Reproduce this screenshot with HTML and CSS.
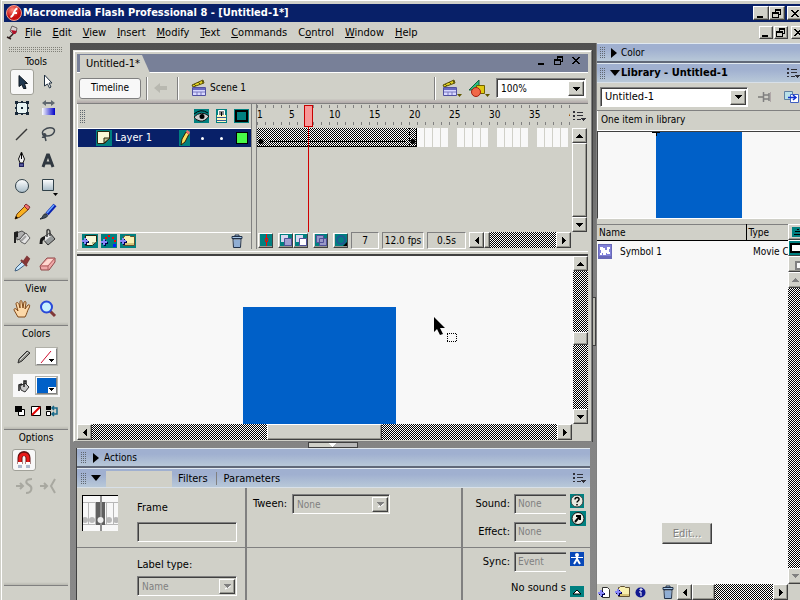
FILE: index.html
```html
<!DOCTYPE html>
<html lang="en">
<head>
<meta charset="utf-8">
<title>Macromedia Flash Professional 8 - [Untitled-1*]</title>
<link rel="stylesheet" href="styles.css">
</head>
<body>
<svg class="defs" aria-hidden="true">
  <defs>
    <linearGradient id="silver" x1="0" y1="0" x2="0" y2="1"><stop offset="0" stop-color="#fff"/><stop offset="1" stop-color="#a8bcc8"/></linearGradient>
    <linearGradient id="blueRamp"><stop offset="0" stop-color="#fff"/><stop offset="1" stop-color="#0000c8"/></linearGradient>
    <radialGradient id="redBall" cx=".4" cy=".3"><stop offset="0" stop-color="#ff9080"/><stop offset="1" stop-color="#c81010"/></radialGradient>
  </defs>
  <symbol id="up" viewBox="0 0 7 4"><path d="M3 0h1v1h1v1h1v1h1v1H0V3h1V2h1V1h1z"/></symbol>
  <symbol id="down" viewBox="0 0 7 4"><path d="M0 0h7v1H6v1H5v1H4v1H3V3H2V2H1V1H0z"/></symbol>
  <symbol id="left" viewBox="0 0 4 7"><path d="M4 0v7H3V6H2V5H1V4H0V3h1V2h1V1h1V0z"/></symbol>
  <symbol id="right" viewBox="0 0 4 7"><path d="M0 0v7h1V6h1V5h1V4h1V3H3V2H2V1H1V0z"/></symbol>
  <symbol id="min" viewBox="0 0 10 9"><path d="M1 7h6v2H1z"/></symbol>
  <symbol id="restore" viewBox="0 0 10 9"><path d="M3 0h6v6H7V5h1V2H4v1H3zM0 3h7v6H0zm1 2v3h5V5z" fill-rule="evenodd"/></symbol>
  <symbol id="close" viewBox="0 0 10 9"><path d="M1 1h2v1h1v1h2V2h1V1h2v1H8v1H7v1H6v1h1v1h1v1h1v1H7V7H6V6H4v1H3v1H1V7h1V6h1V5h1V4H3V3H2V2H1z"/></symbol>
  <symbol id="menu" viewBox="0 0 13 10"><path d="M0 0h2v2H0zM0 4h2v2H0zM0 8h2v1H0zM4 1h6v1H4zM4 4h6v1H4zM4 8h4v1H4zM8 7h5v1h-1v1h-1v1h-1V9H9V8H8z" fill="#303038"/></symbol>
  <symbol id="clap" viewBox="0 0 16 18"><path d="M1 6 12 1l1 3-11 4z" fill="#e0d020" stroke="#5a5008"/><path d="m3 5 2 2m2-4 2 2m2-4 1 3" stroke="#5a5008"/><path d="M1.500 8.500h13v8h-13z" fill="#d8d8ff" stroke="#5050a0"/><path d="M2 9h12v2H2z" fill="#6868c0"/><path d="M2 13h12M6 13v3m4-3v3" stroke="#7878c0"/></symbol>
  <symbol id="trash" viewBox="0 0 14 15"><path d="M5 2V1h4v1m-7 .5h10v2H2z" fill="#a8c8e8" stroke="#203048"/><path d="M3 5h8l-.5 8.500h-7z" fill="#e8f4ff" stroke="#203048"/><path d="M5 6v7m2-7v7m2-7v7" stroke="#3868a8"/></symbol>
  <symbol id="folder" viewBox="0 0 16 14"><path d="M3.500 4V2.500h1l1-1h4l1 1h4v9h-11z" fill="#f8f0b0" stroke="#605030"/><path d="M4 9h10v2H4z" fill="#d8c478"/><use href="#plus" y="4" width="7" height="7"/></symbol>
  <symbol id="plus" viewBox="0 0 7 7"><path d="M3 1h2v2h2v2H5v2H3V5H1V3h2z" fill="#000050"/><path d="M2 0h2v2h2v2H4v2H2V4H0V2h2z" fill="#8888f8"/></symbol>
  <symbol id="offarrow" viewBox="0 0 9 6"><path d="M2 5l5-3v1z" stroke="#fff"/><path d="M1 0h7v1H7v1H6v1H5v1H4V3H3V2H2V1H1z" fill="#808080"/></symbol>
</svg>

<header class="titlebar">
  <svg width="18" height="18" viewBox="0 0 18 18"><circle cx="9" cy="9" r="7.500" fill="url(#redBall)" stroke="#f0a090"/><path d="M12.500 4.500c-4 0-3 8-7 8.500m2.500-4h4" stroke="#fff" stroke-width="2" fill="none"/></svg>
  <h1>Macromedia Flash Professional 8 - [Untitled-1*]</h1>
  <div class="winbtns">
    <button aria-label="Minimize"><svg width="10" height="9"><use href="#min"/></svg></button><button aria-label="Restore"><svg width="10" height="9"><use href="#restore"/></svg></button><button class="gap" aria-label="Close"><svg width="10" height="9"><use href="#close"/></svg></button>
  </div>
</header>
<nav class="menubar">
  <svg width="13" height="16" viewBox="0 0 13 16"><path d="m6 1 5 2-1 5-3 1-3-3z" fill="#d8d0d0" stroke="#686060"/><path d="m5 5 6 1-2 3H7z" fill="#b01028"/><path d="m7 9-4 4m-2-1 4 2" stroke="#302020" stroke-width="1.500"/></svg>
  <a href="#"><u>F</u>ile</a><a href="#"><u>E</u>dit</a><a href="#"><u>V</u>iew</a><a href="#"><u>I</u>nsert</a><a href="#"><u>M</u>odify</a><a href="#"><u>T</u>ext</a><a href="#"><u>C</u>ommands</a><a href="#">C<u>o</u>ntrol</a><a href="#"><u>W</u>indow</a><a href="#"><u>H</u>elp</a>
  <div class="winbtns small">
    <button aria-label="Minimize document"><svg width="10" height="9"><use href="#min"/></svg></button><button aria-label="Restore document"><svg width="10" height="9"><use href="#restore"/></svg></button><button class="gap" aria-label="Close document"><svg width="10" height="9"><use href="#close"/></svg></button>
  </div>
</nav>

<div class="workspace">
  <aside class="tools">
    <div class="grip-h"></div>
    <h2>Tools</h2>
    <div class="toolgrid">
      <button class="on" aria-label="Selection"><svg width="20" height="20" viewBox="0 0 20 20"><path d="M7 3.500v11l3-2 1.500 4h2.500l-1.500-5h3z" fill="#203850" stroke="#101820"/></svg></button>
      <button aria-label="Subselection"><svg width="20" height="20" viewBox="0 0 20 20"><path d="M6.500 3v11l3-2 2 4 1.500-1-2-4h3z" fill="#fff" stroke="#203040"/></svg></button>
      <button aria-label="Free transform"><svg width="20" height="20" viewBox="0 0 20 20"><path d="M4.500 4.500h11v11h-11z" fill="#e8f4f4" stroke="#203040"/><path d="M3 3h3v3H3zM14 3h3v3h-3zM3 14h3v3H3zM14 14h3v3h-3zM9 3h2v2H9zM9 15h2v2H9zM3 9h2v2H3zM15 9h2v2h-2zM9 9h2v2H9z" fill="#182838"/></svg></button>
      <button aria-label="Gradient transform"><svg width="20" height="20" viewBox="0 0 20 20"><path d="M4 10h13v7H4z" fill="url(#blueRamp)"/><path d="m4 5 4-3v2h5V2l4 3-4 3V6H8v2z" fill="#606870"/></svg></button>
      <button aria-label="Line"><svg width="20" height="20" viewBox="0 0 20 20"><path d="M4 16 15 5" stroke="#383838" stroke-width="1.500"/></svg></button>
      <button aria-label="Lasso"><svg width="20" height="20" viewBox="0 0 20 20"><path d="M6 12C1 7 9 3 14 4s2 8-5 8c-4 0-4-3-2-2s0 4-3 3m3 0 1 4" fill="none" stroke="#404850" stroke-width="1.500"/></svg></button>
      <button aria-label="Pen"><svg width="20" height="20" viewBox="0 0 20 20"><path d="m9.500 2 3 7-1.500 4H8L6.500 9z" fill="#f0f0f0" stroke="#101010"/><path d="M9.500 3v6" stroke="#000"/><path d="M7 13h5v4H7z" fill="#202060"/><path d="M8 15h3" stroke="#8890d0"/></svg></button>
      <button aria-label="Text"><svg width="20" height="20" viewBox="0 0 20 20"><path d="M5 17 9.500 5h1L15 17M7 13h6" fill="none" stroke="#303840" stroke-width="3"/></svg></button>
      <button aria-label="Oval"><svg width="20" height="20" viewBox="0 0 20 20"><circle cx="10" cy="10" r="6.500" fill="url(#silver)" stroke="#304048"/></svg></button>
      <button aria-label="Rectangle"><svg width="20" height="20" viewBox="0 0 20 20"><path d="M4.500 3.500h11v11h-11z" fill="url(#silver)" stroke="#304048"/><path d="M15 17h5l-2.500 3z"/></svg></button>
      <button aria-label="Pencil"><svg width="20" height="20" viewBox="0 0 20 20"><path d="m3 17 2-5 8-8 4 3-9 8z" fill="#f8b020" stroke="#704010"/><path d="m12 4 2-2 4 3-2 3z" fill="#f07070" stroke="#803030"/><path d="m3 17 1-3 2 2z" fill="#000"/></svg></button>
      <button aria-label="Brush"><svg width="20" height="20" viewBox="0 0 20 20"><path d="m9 12 8-9" stroke="#0820b0" stroke-width="4"/><path d="m9 11 7-8" stroke="#68a8ff" stroke-width="1.500"/><path d="M2 17c3-1 3-6 6-5s2 4-6 5z" fill="#405060" stroke="#202830"/></svg></button>
      <button aria-label="Ink bottle"><svg width="20" height="20" viewBox="0 0 20 20"><path d="m7 10 7-5 4 5-5 6-4-2z" fill="#e4e4e4" stroke="#606060"/><path d="m4 5 6-2 3 2-5 6-3 1z" fill="#b0b0b0" stroke="#505050"/><path d="M3 15V5l3-1M5 5v4" fill="none" stroke="#202020" stroke-width="2"/><path d="m9 13 5-5" stroke="#a0a0a0" stroke-width="2"/></svg></button>
      <button aria-label="Paint bucket"><svg width="20" height="20" viewBox="0 0 20 20"><path d="m4 10 8-5 5 6-7 6z" fill="#989c9c" stroke="#303030"/><path d="m5 10 6-4 2 2-6 5z" fill="#e8e8e8"/><path d="M3 16c0-5 1-6 4-6" fill="none" stroke="#181818" stroke-width="3"/><path d="M9 9V3c0-2 3-2 3 1v4" fill="none" stroke="#404040" stroke-width="1.500"/></svg></button>
      <button aria-label="Eyedropper"><svg width="20" height="20" viewBox="0 0 20 20"><path d="m3 17 1-3 7-7 3 3-8 6z" fill="#c8e8ff" stroke="#406080"/><path d="m9 6 6 6M12 7l3-4 2 2-3 5z" fill="#a03030" stroke="#803838" stroke-width="2"/></svg></button>
      <button aria-label="Eraser"><svg width="20" height="20" viewBox="0 0 20 20"><path d="m2 12 7-8h8v4l-6 8H3z" fill="#f0a8a8" stroke="#904848"/><path d="M2 12h8l7-8m-7 8v4" stroke="#b06060" fill="none"/><path d="m4 11 6-6h5l-5 6z" fill="#ffd8d0"/></svg></button>
    </div>
    <hr>
    <h2>View</h2>
    <div class="toolgrid">
      <button aria-label="Hand"><svg width="20" height="20" viewBox="0 0 20 20"><path d="M6 18 2 11c0-2 2-2 4 1L4 5c0-2 2-2 3 0l1 4V3c0-2 2-2 2 0l1 6 1-6c1-1 2-1 2 1l-1 6 3-4c2-1 2 1 1 3-2 3-2 6-4 9z" fill="#fcd8a8" stroke="#804818"/></svg></button>
      <button aria-label="Zoom"><svg width="20" height="20" viewBox="0 0 20 20"><path d="m12 12 5 5" stroke="#803838" stroke-width="3"/><circle cx="8.500" cy="8" r="5.500" fill="#c8f0ff" stroke="#2848d8" stroke-width="2"/></svg></button>
    </div>
    <hr>
    <h2>Colors</h2>
    <div class="colorrow">
      <svg width="14" height="14" viewBox="0 0 14 14"><path d="m1 13 1-4 8-8 3 2-8 8z" fill="#909088" stroke="#303030"/><path d="m3 10 8-8" stroke="#ddd"/></svg>
      <button class="swatch none" aria-label="Stroke color"><svg width="19" height="15" viewBox="0 0 19 15"><path d="M4 14 14 2" stroke="#d01030"/><path d="M12 10h5v1h-1v1h-1v1h-1v-1h-1v-1h-1z"/></svg></button>
    </div>
    <div class="colorrow active">
      <svg width="14" height="14" viewBox="0 0 14 14"><path d="m3 7 5-3 4 4-4 5-4-2z" fill="#c8c8c8" stroke="#303030"/><path d="M2 12V6l3-1m2 3V2h2v3" fill="none" stroke="#202020" stroke-width="1.500"/></svg>
      <button class="swatch" aria-label="Fill color"><svg width="19" height="15" viewBox="0 0 19 15"><path d="M0 0h19v15H0z" fill="#0060c8"/><path d="M11 9h8v6h-8z" fill="#fff"/><path d="M12 10h5v1h-1v1h-1v1h-1v-1h-1v-1h-1z"/></svg></button>
    </div>
    <div class="trio">
      <button aria-label="Black and white"><svg width="12" height="12" viewBox="0 0 12 12"><path d="M4.500 4.500h6v6h-6z" fill="#fff" stroke="#000"/><path d="M1 1h7v6H1z"/></svg></button>
      <button aria-label="No color"><svg width="12" height="12" viewBox="0 0 12 12"><path d="M1.500 1.500h9v9h-9z" fill="#fff" stroke="#000"/><path d="m2 10 8-8" stroke="#e00000" stroke-width="2"/></svg></button>
      <button aria-label="Swap colors"><svg width="13" height="12" viewBox="0 0 13 12"><path d="M0 1h5v4H0z"/><path d="M.5 6.500h4v4h-4z" fill="#fff" stroke="#000"/><path d="M6 3h5v6H6M8 1 6 3l2 2m0 2-2 2 2 2" fill="none" stroke="#186888" stroke-width="1.500"/></svg></button>
    </div>
    <hr>
    <h2>Options</h2>
    <button class="magnet" aria-label="Snap to objects"><svg width="16" height="18" viewBox="0 0 16 18"><path d="M4 13V7c0-6 8-6 8 0v6" fill="none" stroke="#601010" stroke-width="5"/><path d="M4 12V7c0-5 8-5 8 0v5" fill="none" stroke="#e81818" stroke-width="3"/><path d="M2 11h4v2H2zM10 11h4v2h-4z" fill="#fff"/><path d="M3 14v3m2-3v3m6-3v3m2-3v3" stroke="#6078a0"/></svg></button>
    <div class="snaps">
      <svg width="18" height="16" viewBox="0 0 18 16"><path d="M0 8h6M4 5l3 3-3 3M16 1c-7 0-7 4-3 6s3 8-3 8" fill="none" stroke="#a8a8a0" stroke-width="2"/></svg>
      <svg width="16" height="16" viewBox="0 0 16 16"><path d="M0 8h6M4 5l3 3-3 3M15 1l-4 7 4 7" fill="none" stroke="#a8a8a0" stroke-width="2"/></svg>
    </div>
    <hr class="last">
  </aside>

  <main class="center">
    <section class="doc">
      <div class="tabs">
        <a class="tab" href="#">Untitled-1*</a>
        <div class="flatbtns">
          <button aria-label="Minimize"><svg width="10" height="9"><use href="#min"/></svg></button><button aria-label="Restore"><svg width="10" height="9"><use href="#restore"/></svg></button><button aria-label="Close"><svg width="10" height="9"><use href="#close"/></svg></button>
        </div>
      </div>
      <div class="scenebar">
        <button class="timelinebtn">Timeline</button>
        <span class="vsep"></span>
        <svg width="14" height="12" viewBox="0 0 14 12"><path d="m0 6 6-5v3h7v4H6v3z" fill="#b8b8b0"/></svg>
        <span class="vsep"></span>
        <a class="scene" href="#"><svg width="16" height="18"><use href="#clap"/></svg>Scene 1</a>
        <span class="vsep push"></span>
        <button class="plain" aria-label="Edit scene"><svg width="20" height="19" viewBox="0 0 20 19"><use href="#clap" width="16" height="18"/><path d="M15 15h5l-2.500 3z" fill="#605800"/></svg></button>
        <button class="plain" aria-label="Edit symbols"><svg width="22" height="19" viewBox="0 0 22 19"><path d="M1 11 11 1v10z" fill="#28c080" stroke="#106040"/><path d="M8.500 6.500h8v8h-8z" fill="#e0c810" stroke="#706000"/><circle cx="8" cy="13" r="4.500" fill="#f06848" stroke="#a02010"/><path d="M17 15h5l-2.500 3z" fill="#605800"/></svg></button>
        <div class="combo zoom"><select aria-label="Zoom"><option>100%</option></select><span class="arrow"><svg width="7" height="4"><use href="#down"/></svg></span></div>
      </div>

      <div class="timeline">
        <div class="layers">
          <div class="layerhead">
            <span class="grip"></span>
            <span class="heads">
              <svg width="15" height="14" viewBox="0 0 15 14"><path d="M0 0h15v14H0z" fill="#008080"/><path d="M0 8q7-7 15-1-4 6-9 5T0 8z" fill="#d0d0d0" stroke="#101010"/><circle cx="8" cy="7.500" r="2.500"/><path d="M0 5q7-6 14-1" fill="none" stroke="#000"/></svg>
              <svg width="11" height="14" viewBox="0 0 11 14"><path d="M0 0h11v14H0z" fill="#008080"/><path d="M2.500 7V1.500h6V7" fill="#888" stroke="#fff"/><path d="M1 6h9v7H1z" fill="#fff8c0"/><path d="M1 8.500h9M1 11.500h9" stroke="#385898"/><path d="M5 3h1v4H5z"/></svg>
              <svg width="15" height="14" viewBox="0 0 15 14"><path d="M0 0h15v14H0z" fill="#008080"/><path d="M2 2h11v10H2z" fill="none" stroke="#000" stroke-width="2"/></svg>
            </span>
          </div>
          <div class="layer">
            <svg width="16" height="16" viewBox="0 0 16 16"><path d="M0 0h16v16H0z" fill="#008080"/><path d="M1.500 1.500h12v7l-5 5h-7z" fill="#f8f8d8" stroke="#282810"/><path d="M8 13V8h6z" fill="#c8c898" stroke="#282810"/></svg>
            <span class="lname">Layer 1</span>
            <svg width="11" height="16" viewBox="0 0 11 16"><path d="M0 0h11v16H0z" fill="#008080"/><path d="m2 15 1-6 4-7 3 2-4 8z" fill="#f8e060" stroke="#302000"/><path d="m7 2 1-2 3 2-1 3z" fill="#f07070"/></svg>
            <i></i><i></i><b></b>
          </div>
          <div class="layerempty"></div>
          <div class="layertools">
            <button class="plain" aria-label="Insert layer"><svg width="16" height="14" viewBox="0 0 16 14"><path d="M0 0h16v14H0z" fill="#008080"/><path d="M3.500 1.500h11v6l-4 4h-7z" fill="#f8f8d8" stroke="#282810"/><path d="M10 11V8h4z" fill="#c0c090"/><use href="#plus" y="4" width="7" height="7"/></svg></button>
            <button class="plain" aria-label="Add motion guide"><svg width="16" height="14" viewBox="0 0 16 14"><path d="M0 0h16v14H0z" fill="#008080"/><path d="M4 3h2v2H4zM7 1h2v2H7zM11 3h2v2h-2zM13 6h2v2h-2z" fill="red"/><path d="M12 10h3v3h-3z" fill="#0020ff"/><use href="#plus" y="5" width="7" height="7"/></svg></button>
            <button class="plain" aria-label="Insert layer folder"><svg width="16" height="14" viewBox="0 0 16 14"><path d="M0 0h16v14H0z" fill="#008080"/><use href="#folder" width="16" height="14"/></svg></button>
            <button class="plain push" aria-label="Delete layer"><svg width="14" height="15"><use href="#trash"/></svg></button>
          </div>
        </div>
        <div class="frames">
          <div class="ruler"><span>1</span><span>5</span><span>10</span><span>15</span><span>20</span><span>25</span><span>30</span><span>35</span><span>40</span></div>
          <div class="framerow"><div class="tween"><svg viewBox="0 0 160 19" width="160" height="19"><path d="M13 13.500h136" stroke="#000" fill="none"/><path d="M152.500 0v19" stroke="#000" stroke-dasharray="2 1"/><circle cx="4" cy="13.500" r="2.500"/><circle cx="156" cy="13.500" r="2.500"/></svg></div></div>
          <div class="playhead"></div>
          <div class="framebar">
            <button class="fb" aria-label="Center frame"><svg width="12" height="12" viewBox="0 0 12 12"><path d="M0 0h12v12H0z" fill="#008080"/><path d="M6.500 0v12" stroke="red"/><path d="M5.500 4.500h2v3h-2z" fill="#008080" stroke="red"/></svg></button>
            <button class="fb sp" aria-label="Onion skin"><svg width="12" height="12" viewBox="0 0 12 12"><path d="M0 0h12v12H0z" fill="#008080"/><path d="M1 1h7v7H1z" fill="#d8d8f0"/><path d="M4.500 4.500h7v7h-7z" fill="#a0a0d0" stroke="#505098"/></svg></button>
            <button class="fb" aria-label="Onion skin outlines"><svg width="12" height="12" viewBox="0 0 12 12"><path d="M0 0h12v12H0z" fill="#008080"/><path d="M1 1h7v7H1z" fill="#d8d8f0"/><path d="M4.500 4.500h7v7h-7z" fill="#fff" stroke="#505098"/></svg></button>
            <button class="fb sp" aria-label="Edit multiple frames"><svg width="12" height="12" viewBox="0 0 12 12"><path d="M0 0h12v12H0z" fill="#008080"/><path d="M1.500 1.500h7v7h-7zM4.500 4.500h7v7h-7z" fill="#9898c8" stroke="#505098"/></svg></button>
            <button class="fb sp" aria-label="Modify onion markers"><svg width="12" height="12" viewBox="0 0 12 12"><path d="M0 0h12v12H0z" fill="#008080"/><circle cx="6" cy="6" r="4" fill="none" stroke="#205890" stroke-width="2"/><path d="M12 8v4H8z"/></svg></button>
            <span class="cell c1">7</span><span class="cell c2">12.0 fps</span><span class="cell c3">0.5s</span>
            <div class="hscroll short"><button aria-label="Scroll left"><svg width="4" height="7"><use href="#left"/></svg></button><span class="thumb"></span><span class="track"></span><button aria-label="Scroll right"><svg width="4" height="7"><use href="#right"/></svg></button></div>
          </div>
        </div>
        <div class="tlside">
          <button class="plain" aria-label="Frame view"><svg width="13" height="10"><use href="#menu"/></svg></button>
          <div class="vscroll"><button aria-label="Scroll up"><svg width="7" height="4"><use href="#up"/></svg></button><span class="thumb grow"></span><button aria-label="Scroll down"><svg width="7" height="4"><use href="#down"/></svg></button></div>
        </div>
      </div>

      <div class="stage">
        <div class="canvas">
          <div class="shape"></div>
          <svg class="cursor" width="25" height="26" viewBox="0 0 25 26"><path d="M1 0v15l3-3 3 6 3-1-3-6h5z"/><path d="M14 16.500h10M14 24.500h10M14.500 17v8M23.500 17v8" stroke="#000" stroke-dasharray="1 1"/></svg>
        </div>
        <div class="vscroll"><button aria-label="Scroll up"><svg width="7" height="4"><use href="#up"/></svg></button><span class="track t1"></span><span class="thumb"></span><span class="track t2"></span><button aria-label="Scroll down"><svg width="7" height="4"><use href="#down"/></svg></button></div>
      </div>
      <div class="hrow">
        <div class="hscroll"><button aria-label="Scroll left"><svg width="4" height="7"><use href="#left"/></svg></button><span class="track"></span><span class="thumb"></span><span class="track"></span><button aria-label="Scroll right"><svg width="4" height="7"><use href="#right"/></svg></button></div>
      </div>
    </section>
    <div class="splitter"><button aria-label="Collapse panels"><svg width="7" height="4"><use href="#down"/></svg></button></div>

    <section class="props">
      <div class="phead"><span class="grip"></span><svg class="tri" width="6" height="10" viewBox="0 0 6 10"><path d="M0 0 6 5 0 10z"/></svg><h3>Actions</h3></div>
      <div class="phead second"><span class="grip"></span><svg class="tri" width="10" height="6" viewBox="0 0 10 6"><path d="M0 0h10L5 6z"/></svg><span class="ptab"></span><a href="#">Filters</a><a href="#" class="div">Parameters</a><button class="plain push" aria-label="Panel options"><svg width="13" height="10"><use href="#menu"/></svg></button></div>
      <div class="pbody">
        <div class="pc framebox">
          <svg width="36" height="36" viewBox="0 0 36 36"><path d="M0 0h36v36H0z" fill="#f8f8f8"/><path d="M0 7.500h36M0 29.500h36M6.500 7v23M13.500 7v23M24.500 7v23M31.500 7v23" stroke="#b8b8b8"/><path d="M14 7h9v23h-9z" fill="#606060"/><path d="M18 0h2v36h-2z" fill="#909090"/><g fill="#b8b8b8"><circle cx="3" cy="25" r="3"/><circle cx="10" cy="25" r="3"/><circle cx="18.500" cy="25" r="3" fill="#eee"/><circle cx="27" cy="25" r="3"/><circle cx="34" cy="25" r="3"/></g><path d="M0 36V0h36" fill="none" stroke="#000" stroke-width="2"/></svg>
          <div class="framelabel"><label for="fl">Frame</label><input id="fl" type="text"></div>
        </div>
        <div class="pc tween-c"><label for="tw">Tween:</label><div class="combo off"><select id="tw" disabled><option>None</option></select><span class="arrow"><svg width="9" height="6"><use href="#offarrow"/></svg></span></div></div>
        <div class="pc soundbox">
          <label for="so">Sound:</label><select id="so" disabled><option>None</option></select>
          <span class="stack"><button class="plain" aria-label="Help"><svg width="14" height="14" viewBox="0 0 14 14"><path d="M0 0h14v14H0z" fill="#008080"/><circle cx="7" cy="7" r="6" fill="#e8e8e0" stroke="#404040"/><path d="M5 5.500c0-3 4.500-2.500 4 0C9 7 7 7 7 8.500M7 10v1.500" fill="none" stroke="#000" stroke-width="1.500"/></svg></button></span>
          <label for="ef">Effect:</label><select id="ef" disabled><option>None</option></select>
          <span class="stack upper"><button class="plain" aria-label="Edit envelope"><svg width="16" height="15" viewBox="0 0 16 15"><path d="M0 0h16v15H0z" fill="#008080"/><circle cx="8" cy="7.500" r="6" fill="#f0f0e8" stroke="#101010"/><path d="m5 11 5-6M6 5h4v4" fill="none" stroke="#000" stroke-width="2"/></svg></button></span>
        </div>
        <div class="pc labeltype"><label for="lt">Label type:</label><div class="combo off"><select id="lt" disabled><option>Name</option></select><span class="arrow"><svg width="9" height="6"><use href="#offarrow"/></svg></span></div></div>
        <div class="pc"></div>
        <div class="pc soundbox low">
          <label for="sy">Sync:</label><select id="sy" disabled><option>Event</option></select>
          <span class="stack"><button class="plain" aria-label="Accessibility"><svg width="14" height="14" viewBox="0 0 14 14"><path d="M0 0h14v14H0z" fill="#0848b8"/><circle cx="7" cy="3" r="2" fill="#fff"/><path d="M1 5.500h12" stroke="#fff"/><path d="M7 4v4M7 7l-3 5M7 7l3 5" stroke="#fff" stroke-width="2"/></svg></button></span>
          <span class="nosound">No sound s</span>
          <span class="stack"><button class="plain" aria-label="Shrink"><svg width="14" height="11" viewBox="0 0 14 11"><path d="M0 0h14v11H0z" fill="#008080"/><path d="m3 8 4-4 4 4z" fill="#fff" stroke="#000"/></svg></button></span>
        </div>
      </div>
    </section>
  </main>

  <aside class="library">
    <button class="sidehandle" aria-label="Collapse library"></button>
    <div class="phead"><span class="grip"></span><svg class="tri" width="6" height="10" viewBox="0 0 6 10"><path d="M0 0 6 5 0 10z"/></svg><h3>Color</h3></div>
    <div class="phead second lib"><span class="grip"></span><svg class="tri" width="10" height="6" viewBox="0 0 10 6"><path d="M0 0h10L5 6z"/></svg><h3 class="strong">Library - Untitled-1</h3><button class="plain push" aria-label="Library options"><svg width="13" height="10"><use href="#menu"/></svg></button></div>
    <div class="libpick">
      <div class="combo"><select aria-label="Library document"><option>Untitled-1</option></select><span class="arrow"><svg width="7" height="4"><use href="#down"/></svg></span></div>
      <button class="plain" aria-label="Pin library"><svg width="14" height="12" viewBox="0 0 14 12"><path d="M0 6h5" stroke="#505050"/><path d="M5.500 1v10M6 4h5v4H6m5-6v8" fill="none" stroke="#808080" stroke-width="1.500"/><path d="M12 1h1v10h-1z" fill="#b0a8a8"/></svg></button>
      <button class="plain" aria-label="New library panel"><svg width="15" height="12" viewBox="0 0 15 12"><path d="M.5.500h8v8h-8z" fill="#b8e0e8" stroke="#6080a0"/><path d="M6.500 3.500h8v8h-8z" fill="#fff" stroke="#4060c0"/><path d="M4 6.500h7M9 4l3 2.500L9 9" fill="none" stroke="#1030d0" stroke-width="1.500"/></svg></button>
    </div>
    <p class="count">One item in library</p>
    <div class="preview"><div class="pshape"></div></div>
    <div class="libmain">
      <div class="list">
        <table>
          <thead><tr><th>Name</th><th>Type</th></tr></thead>
          <tbody><tr><td><svg width="14" height="16" viewBox="0 0 14 16"><path d="M0 0h14v15H0z" fill="#6868b8"/><path d="M1 1h12v11H1z" fill="#8080d8"/><path d="M2 3h3v1h2v2h2V3h3v2h-1v3h1v2H9V9H8v2H5V9H3V6H2zM2 9h2v2H2z" fill="#fff"/></svg>Symbol 1</td><td>Movie Clip</td></tr></tbody>
        </table>
        <button class="edit" disabled>Edit...</button>
      </div>
      <div class="libside">
        <button aria-label="Toggle sort order"><svg width="12" height="13" viewBox="0 0 12 13"><path d="M3 1h9v10H3z" fill="#008080"/><path d="M8 3h2v1H8zM6 5h6v1H6zM5 8h7v1H5z"/></svg></button>
        <button aria-label="Wide library view"><svg width="12" height="14" viewBox="0 0 12 14"><path d="M0 0h12v14H0z" fill="#008080"/><path d="M2 3h10v8H2z" fill="#fff" stroke="#000" stroke-width="2"/></svg></button>
        <button aria-label="Narrow library view"><svg width="12" height="13" viewBox="0 0 12 13"><path d="M7 4h5v7H7z" fill="#f8f8f8" stroke="#808080" stroke-width="2"/></svg></button>
        <button aria-label="Scroll up" class="dis"><svg width="7" height="4"><use href="#up"/></svg></button>
        <span class="track"></span>
        <button aria-label="Scroll down" class="dis"><svg width="7" height="4"><use href="#down"/></svg></button>
      </div>
    </div>
    <div class="libfoot">
      <button class="plain" aria-label="New symbol"><svg width="13" height="13" viewBox="0 0 13 13"><path d="M4.500 1.500h5l2 2v8h-7z" fill="#fff" stroke="#303030"/><use href="#plus" y="4" width="7" height="7"/></svg></button>
      <button class="plain" aria-label="New folder"><svg width="16" height="14"><use href="#folder"/></svg></button>
      <button class="plain" aria-label="Properties"><svg width="11" height="11" viewBox="0 0 11 11"><circle cx="5.500" cy="5.500" r="5" fill="#101890"/><path d="M5 2h2v1H5zM4 5h2v4" stroke="#fff" fill="none"/></svg></button>
      <button class="plain push" aria-label="Delete"><svg width="14" height="15"><use href="#trash"/></svg></button>
      <div class="hscroll"><button aria-label="Scroll left"><svg width="4" height="7"><use href="#left"/></svg></button><span class="thumb"></span><span class="track"></span><button aria-label="Scroll right"><svg width="4" height="7"><use href="#right"/></svg></button></div>
    </div>
  </aside>
</div>
</body>
</html>
```
FILE: styles.css
```css
* { box-sizing: border-box; }
:root {
  --face: #d0d0c8;
  --paper: #f8f8f8;
  --shade: #808080;
  --dark: #404040;
  --blue: #0060c8;
  --hatch: repeating-conic-gradient(#000 0 25%, #fff 0 50%) 0 0 / 2px 2px;
}
body {
  margin: 0;
  height: 100vh;
  display: flex;
  flex-direction: column;
  overflow: hidden;
  background: var(--face);
  border-left: 1px solid var(--face);
  box-shadow: inset 1px 1px #fff;
  padding: 4px 0 0 3px;
  font: 10px/14px "DejaVu Sans Condensed", "DejaVu Sans", sans-serif;
  color: #000;
}
button, select, input { font: inherit; color: inherit; margin: 0; padding: 0; border-radius: 0; }
a { color: inherit; text-decoration: none; }
h1, h2, h3, p { margin: 0; font-size: 10px; font-weight: normal; }
svg { display: block; flex: none; }
.defs { position: absolute; width: 0; height: 0; }
.push { margin-left: auto; }
.plain { border: 0; background: none; display: block; flex: none; }

/* raised buttons */
.winbtns button, .hscroll button, .vscroll button, .thumb, .libside button, .fb, .arrow {
  background: var(--face);
  border: 1px solid;
  border-color: #fff var(--dark) var(--dark) #fff;
  box-shadow: inset -1px -1px #989890;
  display: flex;
  align-items: center;
  justify-content: center;
  flex: none;
}
.titlebar { display: flex; align-items: center; height: 18px; flex: none; background: #082068; color: #fff; padding-left: 1px; }
.titlebar h1 { font-size: 11px; font-weight: bold; white-space: nowrap; }
.winbtns { display: flex; margin-left: auto; color: #000; }
.winbtns button { width: 16px; height: 14px; }
.winbtns .gap { margin-left: 2px; }
.titlebar .winbtns { margin-right: -3px; }
.menubar { display: flex; align-items: center; height: 21px; flex: none; padding-left: 2px; font-size: 11px; }
.menubar a { margin-right: 11px; }
.menubar svg + a { margin-left: 6px; }
.winbtns.small button { width: 14px; height: 13px; }
.menubar .winbtns { margin-right: -5px; gap: 1px; }

.workspace { flex: 1; display: flex; min-height: 0; }

/* tools */
.tools { width: 66px; flex: none; display: flex; flex-direction: column; align-items: center; padding: 4px 2px 0 0; }
.grip-h { width: 54px; height: 5px; margin-bottom: 3px; background: conic-gradient(at 1px 1px, transparent 75%, #808078 0) 0 0 / 2px 2px; flex: none; }
.tools h2 { height: 14px; flex: none; }
.toolgrid { display: grid; grid-template-columns: 24px 24px; grid-auto-rows: 26px; column-gap: 2px; flex: none; margin-right: 2px; }
.toolgrid button { border: 0; background: none; display: flex; align-items: center; justify-content: center; }
.toolgrid .on, .magnet { background: var(--paper); border: 1px solid #a0a098; border-radius: 3px; }
.tools hr { width: 64px; height: 4px; margin: 0 0 1px; border: 0; border-bottom: 1px solid var(--shade); background: linear-gradient(var(--face), #b8b8b0); flex: none; }
.colorrow { display: flex; align-items: center; justify-content: flex-end; gap: 5px; width: 47px; height: 23px; padding-right: 3px; margin: 4px 0 2px; flex: none; }
.colorrow.active { background: var(--paper); }
.swatch { background: #fff; border: 1px solid #fff; border-right-color: var(--shade); border-bottom-color: var(--shade); outline: 1px solid #b0b0a8; width: 21px; height: 17px; }
.trio { display: flex; gap: 4px; margin: 6px 0 9px; flex: none; }
.trio button { border: 0; background: none; }
.magnet { width: 24px; height: 22px; display: flex; justify-content: center; align-items: center; align-self: flex-start; margin: 4px 0 0 8px; flex: none; }
.snaps { display: flex; gap: 6px; margin: 7px 0 0; }
.tools .last { margin-top: 88px; }

/* centre */
.center { flex: 1; min-width: 0; display: flex; flex-direction: column; background: linear-gradient(#505050, #808080 40%, #888); padding: 7px 4px 0 3px; }
.doc { flex: 1; min-height: 0; display: flex; flex-direction: column; background: var(--face); border: 1px solid #e8e8e0; border-right-color: var(--shade); border-bottom-color: var(--shade); box-shadow: inset 1px 1px #fff, 1px 0 var(--dark); padding: 3px 3px 1px 3px; }
.tabs { display: flex; align-items: flex-end; height: 19px; background: #788098; border-bottom: 1px solid #fff; flex: none; padding-left: 3px; }
.tab { background: var(--face); height: 18px; margin-bottom: -1px; padding: 2px 10px 0 6px; clip-path: polygon(0 0, calc(100% - 8px) 0, 100% 100%, 0 100%); font-size: 11px; }
.flatbtns { margin-left: auto; display: flex; gap: 7px; align-self: flex-start; padding: 2px 7px 0 0; }
.flatbtns button { border: 0; background: none; }
.scenebar { display: flex; align-items: center; height: 31px; flex: none; padding: 0 2px; background: linear-gradient(var(--face) 85%, #b0a8a8); border-bottom: 1px solid var(--shade); }
.timelinebtn { width: 62px; height: 21px; background: var(--paper); border: 1px solid var(--shade); border-radius: 3px; }
.vsep { width: 2px; height: 23px; background: linear-gradient(90deg, var(--shade) 50%, #fff 50%); margin: 0 6px 0 5px; flex: none; }
.vsep + svg + .vsep { margin: 0 12px 0 9px; }
.scene { display: flex; align-items: center; gap: 3px; }
.scenebar .push { margin-left: auto; margin-right: 6px; }
.scenebar .plain { margin-right: 6px; }

.combo { display: flex; background: #fff; border: 1px solid; border-color: var(--shade) #fff #fff var(--shade); box-shadow: inset 1px 1px var(--dark); height: 20px; padding: 2px 1px 1px 3px; line-height: 14px; }
.combo select { appearance: none; border: 0; background: none; flex: 1; min-width: 0; outline: 0; padding-left: 1px; }
.combo .arrow { width: 16px; pointer-events: none; }
.combo.zoom { width: 90px; }
.combo.off { background: none; color: var(--shade); }
.combo.off select, .soundbox select { color: var(--shade); opacity: 1; }

.timeline { height: 152px; flex: none; display: flex; border-bottom: 2px solid var(--dark); padding-bottom: 5px; background: linear-gradient(#fff, #fff) 0 147px / 100% 1px no-repeat; }
.layers { width: 175px; flex: none; display: flex; flex-direction: column; border-right: 1px solid var(--shade); border-left: 1px solid #fff; }
.layerhead { height: 24px; display: flex; align-items: center; padding-left: 2px; }
.grip { width: 5px; height: 13px; background: conic-gradient(at 1px 1px, transparent 75%, #606870 0) 0 0 / 2px 2px; flex: none; }
.heads { display: flex; gap: 7px; margin-left: auto; padding-right: 2px; }
.layer { height: 19px; background: #082068; border-top: 1px solid #fff; color: #fff; display: flex; align-items: center; padding-left: 18px; }
.lname { margin-left: 3px; flex: 1; font-size: 11px; }
.layer i { width: 3px; height: 3px; border-radius: 2px; background: #fff; margin-left: 11px; }
.layer i + i { margin-left: 16px; }
.layer b { width: 12px; height: 12px; border: 1px solid #000; background: #48f848; margin: 0 3px 0 13px; }
.layerempty { flex: 1; }
.layertools { border-top: 1px solid #fff; height: 17px; display: flex; align-items: center; gap: 3px; padding: 0 7px 0 4px; }

.frames { flex: 1; min-width: 0; display: flex; flex-direction: column; position: relative; border-left: 1px solid var(--shade); margin-left: 4px; }
.ruler { height: 24px; display: flex; overflow: hidden; padding-top: 4px; margin-right: 2px;
  background:
    repeating-linear-gradient(90deg, var(--shade) 0 1px, transparent 1px 8px) 0 1px / 100% 3px no-repeat,
    repeating-linear-gradient(90deg, var(--shade) 0 1px, transparent 1px 8px) 0 18px / 100% 3px no-repeat; }
.ruler span { width: 40px; flex: none; }
.ruler span:first-child { width: 32px; }
.framerow { height: 19px;
  background:
    repeating-linear-gradient(90deg, transparent 0 32px, var(--face) 32px 40px),
    repeating-linear-gradient(90deg, var(--paper) 0 7px, var(--face) 7px 8px); }
.tween { width: 160px; height: 19px; background: var(--hatch); border-bottom: 1px solid #000; border-right: 1px solid #000; }
.playhead { position: absolute; left: 47px; top: 1px; width: 9px; height: 22px; border: 1px solid #c80000; background: #f89898; }
.playhead::after { content: ""; position: absolute; left: 3px; top: 21px; width: 1px; height: 105px; background: #d00000; }
.framebar { margin-top: auto; display: flex; align-items: center; height: 18px; }
.fb { width: 15px; height: 15px; padding: 0; }
.fb.sp { margin-left: 5px; }
.fb:first-child { margin-left: 1px; }
.cell { border: 1px solid; border-color: var(--shade) #fff #fff var(--shade); height: 17px; line-height: 15px; text-align: center; margin-left: 3px; flex: none; }
.c1 { width: 28px; }
.c2 { width: 42px; }
.c3 { width: 39px; }
.hscroll { display: flex; flex: 1; height: 16px; min-width: 0; }
.hscroll button { width: 15px; }
.short { margin: 0 1px 0 3px; }
.short .thumb { width: 6px; }
.track { flex: 1; background: var(--hatch); }
.vscroll { display: flex; flex-direction: column; width: 15px; flex: none; }
.vscroll button { height: 15px; }
.tlside { display: flex; flex-direction: column; width: 16px; flex: none; }
.tlside .plain { height: 24px; padding: 0 0 0 1px; }
.tlside .vscroll { height: 104px; }
.grow { flex: 1; }
.stage { flex: 1; min-height: 0; display: flex; background: var(--paper); }
.canvas { flex: 1; position: relative; overflow: hidden; }
.shape { position: absolute; left: 166px; top: 51px; width: 153px; bottom: 0; background: var(--blue); }
.cursor { position: absolute; left: 356px; top: 61px; }
.stage .thumb { height: 13px; }
.stage .t1 { flex: 62; }
.stage .t2 { flex: 65; }
.hrow { display: flex; padding-right: 16px; flex: none; }
.hrow .thumb { width: 115px; }
.splitter { height: 6px; flex: none; display: flex; justify-content: center; }
.splitter button { width: 50px; border: 1px solid var(--dark); background: linear-gradient(90deg, var(--face) 50%, #b8b8b8 50%); fill: #fff; display: flex; justify-content: center; align-items: center; }

/* panels */
.props { flex: none; background: var(--face); margin: 0 2px 0 3px; border-left: 1px solid var(--dark); }
.phead { display: flex; align-items: center; height: 20px; background: linear-gradient(#a0b0d0 30%, #b8c8d8); border-top: 1px solid #e0e8f0; border-bottom: 2px solid #606878; padding-left: 4px; flex: none; }
.phead .grip { height: 11px; }
.phead .tri { margin-left: 5px; }
.phead h3 { margin-left: 5px; }
.phead h3.strong { font-size: 11px; font-weight: bold; margin-left: 2px; white-space: nowrap; }
.phead.second { height: 20px; border-bottom: 1px solid #d8e0e8; }
.phead .tri[width="6"] { margin-left: 7px; }
.phead .ptab { width: 66px; height: 16px; align-self: flex-end; background: var(--face); margin: 0 6px 0 5px; }
.phead a { height: 13px; line-height: 13px; padding-right: 8px; font-size: 11px; }
.phead a.div { border-left: 1px solid var(--shade); padding-left: 7px; }
.phead .push { margin-right: 4px; }
.pbody { display: grid; grid-template-columns: 170px 1fr 127px; grid-template-rows: 60px 52px; overflow: hidden; }
.pbody label, .nosound { font-size: 11px; }
.pc { min-width: 0; border-right: 2px solid var(--shade); border-bottom: 1px solid var(--shade); overflow: hidden; }
.pc:nth-child(3n) { border-right: 0; }
.pc:nth-child(n+4) { border-bottom: 0; }
.framebox { display: flex; padding: 7px 8px 0 5px; gap: 19px; }
.framelabel { flex: 1; display: flex; flex-direction: column; gap: 7px; padding-top: 6px; min-width: 0; }
.framelabel input { width: 100%; height: 20px; }
input, .soundbox select { appearance: none; background: none; border: 1px solid; border-color: var(--shade) #fff #fff var(--shade); box-shadow: inset 1px 1px var(--dark); }
.tween-c { display: flex; align-items: flex-start; gap: 5px; padding: 6px 5px 0 6px; line-height: 20px; }
.tween-c .combo { width: 98px; }
.labeltype { padding: 10px 8px 0 60px; }
.labeltype .combo { margin-top: 4px; }
.soundbox { display: grid; grid-template-columns: 47px 52px 20px; grid-auto-rows: 20px; row-gap: 8px; column-gap: 4px; padding-top: 6px; justify-items: stretch; align-items: center; }
.soundbox label { text-align: right; white-space: nowrap; }
.soundbox select { height: 20px; border-right: 0; padding-left: 3px; width: 100%; }
.low { row-gap: 6px; padding-top: 4px; }
.nosound { grid-column: 1 / 3; text-align: right; white-space: nowrap; }
.stack { align-self: start; }
.stack.upper { margin-top: -11px; }
.low .stack:last-child { padding-top: 8px; }

/* library */
.library { width: 204px; flex: none; display: flex; flex-direction: column; border-left: 1px solid var(--shade); position: relative; background: var(--face); }
.sidehandle { position: absolute; left: -5px; top: 254px; width: 4px; height: 49px; border: 1px solid var(--dark); background: #b8b8b0; padding: 0; }
.library .phead { padding-left: 3px; }
.library .phead .tri[width="6"] { margin-left: 6px; }
.library .phead .tri + h3 { margin-left: 4px; }
.library .phead .tri + h3.strong { margin-left: 1px; }
.lib .push { margin-right: 0; }
.libpick { display: flex; align-items: center; gap: 10px; padding: 4px 0 4px 3px; height: 28px; flex: none; border-bottom: 1px solid var(--shade); }
.libpick .combo { width: 148px; }
.libpick .plain + .plain { margin-left: 2px; }
.libpick select { font-size: 11px; }
.count { height: 20px; line-height: 18px; padding-left: 3px; flex: none; border-bottom: 1px solid #fff; border-left: 1px solid #fff; }
.preview { height: 88px; flex: none; background: var(--paper); border-top: 1px solid var(--dark); border-left: 1px solid var(--dark); border-bottom: 1px solid #fff; display: flex; justify-content: center; }
.pshape { width: 86px; background: var(--blue); position: relative; }
.pshape::before { content: ""; position: absolute; left: -4px; top: 0; width: 8px; height: 4px; background: linear-gradient(#000, #000) 0 0 / 8px 1px no-repeat, linear-gradient(#000, #000) 4px 0 / 1px 4px no-repeat; }
.libmain { flex: 1; min-height: 0; display: flex; border-top: 5px solid var(--face); }
.list { flex: 1; min-width: 0; background: var(--paper); overflow: hidden; position: relative; }
table { border-collapse: collapse; table-layout: fixed; width: 100%; }
th { height: 16px; padding: 0 0 0 2px; text-align: left; font-weight: normal; background: var(--face); border-top: 1px solid var(--shade); border-bottom: 1px solid #000; line-height: 14px; }
th:first-child { width: 149px; border-right: 1px solid #000; }
td { padding: 2px 0 0 7px; white-space: nowrap; height: 20px; overflow: hidden; }
td:first-child { padding-left: 1px; }
td svg { display: inline-block; vertical-align: middle; margin-right: 8px; }
.edit { position: absolute; left: 65px; bottom: 40px; width: 50px; height: 21px; background: var(--face); border: 1px solid; border-color: var(--face) var(--dark) var(--dark) var(--face); box-shadow: inset -1px -1px var(--shade); color: var(--shade); text-shadow: 1px 1px #fff; font-size: 11px; }
.libside { width: 12px; flex: none; display: flex; flex-direction: column; overflow: hidden; }
.libside button { height: 16px; width: 15px; justify-content: flex-start; padding: 0; overflow: hidden; }
.libside .dis { fill: var(--shade); padding-left: 3px; }
.libfoot { height: 16px; flex: none; display: flex; align-items: center; gap: 4px; padding-left: 1px; }
.libfoot .hscroll { flex: none; width: 111px; margin-right: 12px; }
.libfoot .thumb { width: 23px; }
.libfoot .push { margin-right: -2px; }
```
